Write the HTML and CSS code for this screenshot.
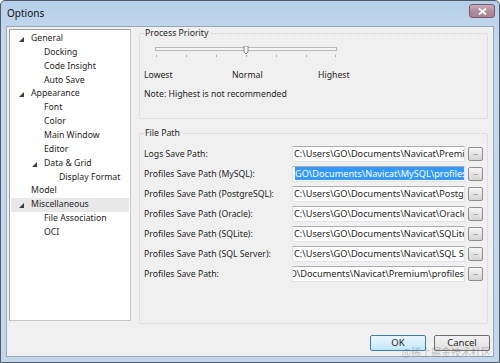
FILE: index.html
```html
<!DOCTYPE html>
<html>
<head>
<meta charset="utf-8">
<link rel="stylesheet" href="styles.css">
</head>
<body>
<div class="window">
  <div class="titlebar">
    <span class="title">Options</span>
    <span class="close"><svg width="9" height="7" viewBox="0 0 9 7"><path d="M1 0.5 L8 6.5 M8 0.5 L1 6.5" stroke="#fff" stroke-width="1.8"/></svg></span>
  </div>
  <div class="client">
    <div class="main">
      <div class="tree">
        <div class="row l0"><span class="arrow"><svg width="5" height="5" viewBox="0 0 5 5"><polygon points="5,0 5,5 0,5" fill="#3c3c3c"/></svg></span>General</div>
        <div class="row l1">Docking</div>
        <div class="row l1">Code Insight</div>
        <div class="row l1">Auto Save</div>
        <div class="row l0"><span class="arrow"><svg width="5" height="5" viewBox="0 0 5 5"><polygon points="5,0 5,5 0,5" fill="#3c3c3c"/></svg></span>Appearance</div>
        <div class="row l1">Font</div>
        <div class="row l1">Color</div>
        <div class="row l1">Main Window</div>
        <div class="row l1">Editor</div>
        <div class="row l1 exp"><span class="arrow"><svg width="5" height="5" viewBox="0 0 5 5"><polygon points="5,0 5,5 0,5" fill="#3c3c3c"/></svg></span>Data &amp; Grid</div>
        <div class="row l2">Display Format</div>
        <div class="row l0 noarrow">Model</div>
        <div class="row l0 selected"><span class="arrow"><svg width="5" height="5" viewBox="0 0 5 5"><polygon points="5,0 5,5 0,5" fill="#3c3c3c"/></svg></span>Miscellaneous</div>
        <div class="row l1">File Association</div>
        <div class="row l1">OCI</div>
      </div>
      <div class="right">
        <fieldset class="group g1">
          <legend>Process Priority</legend>
          <svg class="slider" width="186" height="12" viewBox="0 0 186 12">
            <rect x="0.5" y="1.5" width="181" height="3" fill="#f4f4f4" stroke="#b8b8b8"/>
            <path d="M89 0 h4 v6 l-2 2 l-2 -2 z" fill="#fafafa" stroke="#707070" stroke-width="0.8"/>
            <g stroke="#a8a8a8" stroke-width="1">
              <line x1="1.5" y1="9" x2="1.5" y2="11"/>
              <line x1="31.5" y1="9" x2="31.5" y2="11"/>
              <line x1="61.5" y1="9" x2="61.5" y2="11"/>
              <line x1="91.5" y1="9" x2="91.5" y2="11"/>
              <line x1="121.5" y1="9" x2="121.5" y2="11"/>
              <line x1="151.5" y1="9" x2="151.5" y2="11"/>
              <line x1="180.5" y1="9" x2="180.5" y2="11"/>
            </g>
          </svg>
          <div class="levels"><span class="lv1">Lowest</span><span class="lv2">Normal</span><span class="lv3">Highest</span></div>
          <div class="note">Note: Highest is not recommended</div>
        </fieldset>
        <fieldset class="group g2">
          <legend>File Path</legend>
          <div class="prow"><span class="plabel">Logs Save Path:</span><span class="pinput">C:\Users\GO\Documents\Navicat\Premium\logs\</span><span class="browse">...</span></div>
          <div class="prow"><span class="plabel">Profiles Save Path (MySQL):</span><span class="pinput sel"><span class="hl">GO\Documents\Navicat\MySQL\profiles\</span></span><span class="browse">...</span></div>
          <div class="prow"><span class="plabel">Profiles Save Path (PostgreSQL):</span><span class="pinput">C:\Users\GO\Documents\Navicat\PostgreSQL\profiles\</span><span class="browse">...</span></div>
          <div class="prow"><span class="plabel">Profiles Save Path (Oracle):</span><span class="pinput">C:\Users\GO\Documents\Navicat\Oracle\profiles\</span><span class="browse">...</span></div>
          <div class="prow"><span class="plabel">Profiles Save Path (SQLite):</span><span class="pinput">C:\Users\GO\Documents\Navicat\SQLite\profiles\</span><span class="browse">...</span></div>
          <div class="prow"><span class="plabel">Profiles Save Path (SQL Server):</span><span class="pinput">C:\Users\GO\Documents\Navicat\SQL Server\profiles\</span><span class="browse">...</span></div>
          <div class="prow"><span class="plabel">Profiles Save Path:</span><span class="pinput end">O\Documents\Navicat\Premium\profiles\</span><span class="browse">...</span></div>
        </fieldset>
      </div>
    </div>
    <div class="footer">
      <span class="btn ok">OK</span>
      <span class="btn cancel">Cancel</span>
    </div>
    <div class="watermark">@稀土掘金技术社区</div>
  </div>
</div>
</body>
</html>
```
FILE: styles.css
```css
html, body {
  margin: 0;
  padding: 0;
  width: 500px;
  height: 363px;
  overflow: hidden;
  background: #ffffff;
}
body {
  font-family: "Noto Sans", "Open Sans", sans-serif;
  font-size: 8.7px;
  color: #1e1e1e;
}
.window {
  box-sizing: border-box;
  width: 500px;
  height: 363px;
  border: 1px solid #4d5b6b;
  border-radius: 5px 5px 0 0;
  background: linear-gradient(#b6cfe9, #c5d9ee 40px, #c2d6ec);
  display: flex;
  flex-direction: column;
  padding: 0 5px 5px 5px;
}
.titlebar {
  height: 25px;
  display: flex;
  align-items: center;
  justify-content: space-between;
  flex-shrink: 0;
}
.title {
  font-size: 10px;
  color: #111;
  margin-left: 1px;
  margin-top: -2px;
}
.close {
  width: 24px;
  height: 12px;
  margin-right: -1px;
  margin-top: -5px;
  border: 1px solid #7a5a66;
  border-radius: 3px;
  background: linear-gradient(#c9aeb8, #b08d9b 50%, #a98494);
  display: flex;
  align-items: center;
  justify-content: center;
}
.client {
  flex: 1;
  background: #f0f0f0;
  border: 1px solid #97a6b5;
  display: flex;
  flex-direction: column;
  position: relative;
}
.main {
  display: flex;
  align-items: flex-start;
  padding: 2px 0 0 2px;
}
.tree {
  box-sizing: border-box;
  width: 122px;
  height: 292px;
  background: #fff;
  border: 1px solid #a0a0a0;
  border-bottom-color: #c8c8c8;
  border-right-color: #c8c8c8;
  padding-top: 2px;
}
.row {
  height: 13.86px;
  line-height: 13.86px;
  white-space: nowrap;
  position: relative;
  display: flex;
  align-items: center;
}
.arrow {
  display: inline-flex;
  width: 5px;
  height: 5px;
  margin-right: 7px;
  margin-top: 1px;
}
.l0 { padding-left: 9px; }
.l0.noarrow { padding-left: 21px; }
.l1 { padding-left: 34px; }
.l1.exp { padding-left: 22px; }
.l2 { padding-left: 49px; }
.selected {
  background: #e8e8e8;
  margin: 0 1px;
  padding-left: 8px;
}
.right {
  margin-left: 8px;
  margin-top: -2px;
  width: 349px;
  display: flex;
  flex-direction: column;
}
.group {
  margin: 0;
  border: 1px dotted #cfcfcf;
  border-radius: 2px;
  padding: 0 0 0 4px;
}
.group legend {
  padding: 0 2px 0 1px;
  margin-left: 0;
  line-height: 12px;
  color: #1e1e1e;
}
.g1 {
  height: 92px;
  box-sizing: border-box;
}
.slider {
  display: block;
  margin: 7px 0 0 11px;
}
.levels {
  display: flex;
  margin-top: 11px;
  height: 12px;
  line-height: 12px;
}
.lv1 { width: 88px; }
.lv2 { width: 86px; }
.note {
  margin-top: 7px;
  line-height: 12px;
}
.g2 {
  margin-top: 8px;
  height: 197px;
  box-sizing: border-box;
  padding-top: 5px;
}
.prow {
  display: flex;
  align-items: center;
  height: 20px;
}
.plabel {
  width: 148px;
  white-space: nowrap;
}
.pinput {
  box-sizing: border-box;
  width: 173px;
  height: 16px;
  background: #fff;
  border: 1px solid #e2e3ea;
  border-top-color: #abadb3;
  white-space: nowrap;
  overflow: hidden;
  line-height: 14px;
  padding-left: 1px;
  font-size: 9.2px;
}
.pinput.end {
  direction: rtl;
  text-align: left;
  padding-left: 0;
}
.pinput.sel {
  padding-left: 2px;
}
.hl {
  background: #3399ff;
  color: #fff;
  display: inline-block;
  line-height: 13px;
}
.browse {
  box-sizing: border-box;
  width: 15px;
  height: 14px;
  margin-left: 3px;
  border: 1px solid #8e8f8f;
  border-radius: 2px;
  background: linear-gradient(#f6f6f6, #e4e4e4 50%, #d6d6d6);
  font-size: 6px;
  line-height: 10px;
  text-align: center;
  color: #333;
}
.footer {
  display: flex;
  justify-content: flex-end;
  gap: 8px;
  margin-top: 11px;
  padding-right: 3px;
}
.btn {
  box-sizing: border-box;
  width: 56px;
  height: 16px;
  border-radius: 2px;
  text-align: center;
  line-height: 14px;
  font-size: 9.5px;
}
.ok {
  border: 1px solid #3c7fb1;
  background: linear-gradient(#eaf6fd, #d9f0fc 50%, #bee6fd);
}
.cancel {
  border: 1px solid #707070;
  background: linear-gradient(#f2f2f2, #ebebeb 50%, #dddddd);
}
.watermark {
  position: absolute;
  right: 2px;
  bottom: -3px;
  font-family: "Noto Sans CJK SC", sans-serif;
  font-size: 10px;
  color: rgba(120, 120, 120, 0.45);
}
```
